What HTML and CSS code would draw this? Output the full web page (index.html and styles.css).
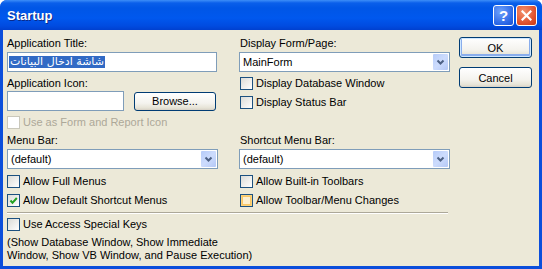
FILE: index.html
```html
<!DOCTYPE html>
<html lang="en">
<head>
  <meta charset="UTF-8">
  <title>Startup</title>
  <link rel="stylesheet" href="styles.css">
</head>
<body>

  <div class="window">
    <div class="titlebar">
      <span class="title">Startup</span>
      <div class="caption-btns">
        <span class="cap-btn help">?</span>
        <span class="cap-btn close">
          <svg width="11" height="11" viewBox="0 0 11 11"><path d="M1.5 1.5 L9.5 9.5 M9.5 1.5 L1.5 9.5" stroke="#fff" stroke-width="2.2" stroke-linecap="square"/></svg>
        </span>
      </div>
    </div>

    <div class="client">
      <div class="form">
        <div class="grid">
          <div class="col">
            <div class="label">Application Title:</div>
            <div class="textbox"><span class="selected">شاشة ادخال البيانات</span></div>
            <div class="label gap5">Application Icon:</div>
            <div class="icon-row">
              <div class="textbox short"></div>
              <button class="btn browse">Browse...</button>
            </div>
            <label class="check disabled gap5"><span class="box"></span>Use as Form and Report Icon</label>
          </div>

          <div class="col">
            <div class="label indent">Display Form/Page:</div>
            <div class="combo"><span>MainForm</span><span class="drop"><svg width="15" height="16" viewBox="0 0 15 16"><path d="M4.5 6.5 L7.5 9.5 L10.5 6.5" fill="none" stroke="#4d6185" stroke-width="2"/></svg></span></div>
            <label class="check indent gap5"><span class="box"></span>Display Database Window</label>
            <label class="check indent gap6"><span class="box"></span>Display Status Bar</label>
          </div>

          <div class="col">
            <div class="label">Menu Bar:</div>
            <div class="combo"><span>(default)</span><span class="drop"><svg width="15" height="16" viewBox="0 0 15 16"><path d="M4.5 6.5 L7.5 9.5 L10.5 6.5" fill="none" stroke="#4d6185" stroke-width="2"/></svg></span></div>
            <label class="check gap6"><span class="box"></span>Allow Full Menus</label>
            <label class="check gap6"><span class="box"><svg width="11" height="11" viewBox="0 0 11 11"><path d="M2.5 5.5 L4.5 7.8 L8.8 3" fill="none" stroke="#21a121" stroke-width="2"/></svg></span>Allow Default Shortcut Menus</label>
          </div>

          <div class="col">
            <div class="label indent">Shortcut Menu Bar:</div>
            <div class="combo"><span>(default)</span><span class="drop"><svg width="15" height="16" viewBox="0 0 15 16"><path d="M4.5 6.5 L7.5 9.5 L10.5 6.5" fill="none" stroke="#4d6185" stroke-width="2"/></svg></span></div>
            <label class="check indent gap6"><span class="box"></span>Allow Built-in Toolbars</label>
            <label class="check indent gap6"><span class="box hot"></span>Allow Toolbar/Menu Changes</label>
          </div>
        </div>

        <div class="sep"></div>

        <label class="check"><span class="box"></span>Use Access Special Keys</label>
        <p class="note">(Show Database Window, Show Immediate<br>Window, Show VB Window, and Pause Execution)</p>
      </div>

      <div class="buttons">
        <button class="btn default">OK</button>
        <button class="btn">Cancel</button>
      </div>
    </div>
  </div>

</body>
</html>
```

FILE: styles.css
```css
body {
  margin: 0;
  background: #fff;
  font-family: 'Liberation Sans', Arial, sans-serif;
  font-size: 11px;
  color: #000;
}

.window {
  width: 542px;
  height: 269px;
  background: #0b4edb;
  border-radius: 7px 7px 0 0;
  display: flex;
  flex-direction: column;
  overflow: hidden;
}

.titlebar {
  height: 30px;
  flex: none;
  display: flex;
  align-items: center;
  justify-content: space-between;
  padding: 0 5px 0 7px;
  background: linear-gradient(#3d8ef8 0px, #0a5fea 3px, #0056e6 8px, #0058ee 18px, #004be0 26px, #0040cf 30px);
}

.title {
  color: #fff;
  font-weight: bold;
  font-size: 13px;
  text-shadow: 1px 1px 0 #0a2a8a;
  margin-top: 1px;
}

.caption-btns {
  display: flex;
  gap: 2px;
}

.cap-btn {
  width: 19px;
  height: 19px;
  border: 1px solid #fff;
  border-radius: 3px;
  display: flex;
  align-items: center;
  justify-content: center;
  color: #fff;
  font-weight: bold;
  font-size: 15px;
}

.help {
  background: radial-gradient(circle at 35% 30%, #6fa2fb, #2a66e6 70%, #1c50d0);
}

.close {
  background: radial-gradient(circle at 35% 30%, #f3926e, #e0502d 65%, #c83a16);
}

.client {
  flex: 1;
  margin: 0 3px 3px 3px;
  background: #ece9d8;
  display: flex;
  padding: 7px 7px 0 4px;
}

.form {
  width: 441px;
}

.grid {
  display: grid;
  grid-template-columns: 232px 209px;
  row-gap: 5px;
}

.col {
  display: flex;
  flex-direction: column;
  align-items: flex-start;
}

.label {
  line-height: 13px;
  height: 13px;
}

.indent {
  margin-left: 1px;
}

.gap5 { margin-top: 5px; }
.gap6 { margin-top: 6px; }

.textbox {
  margin-top: 2px;
  width: 207px;
  height: 18px;
  border: 1px solid #7f9db9;
  background: #fff;
  display: flex;
  align-items: center;
  padding-left: 1px;
  box-sizing: content-box;
}

.textbox.short {
  width: 114px;
  margin-top: 0;
}

.selected {
  background: #316ac5;
  color: #fff;
  font-family: 'DejaVu Sans', sans-serif;
  font-size: 11px;
  line-height: 12px;
  padding: 0 1px;
}

.icon-row {
  margin-top: 1px;
  display: flex;
  align-items: center;
}

.btn {
  font-family: 'Liberation Sans', Arial, sans-serif;
  font-size: 11px;
  color: #000;
  border: 1px solid #003c74;
  border-radius: 3px;
  background: linear-gradient(#ffffff 0%, #f4f3ee 60%, #e6e3d6 88%, #d6d0c5 100%);
  padding: 0;
}

.browse {
  margin-left: 10px;
  width: 82px;
  height: 19px;
}

.combo {
  margin-top: 2px;
  height: 18px;
  border: 1px solid #7f9db9;
  background: #fff;
  display: flex;
  align-items: center;
  justify-content: space-between;
  padding-left: 3px;
  padding-right: 1px;
  box-sizing: content-box;
  width: 205px;
}

.drop {
  width: 15px;
  height: 16px;
  border-radius: 1px;
  background: linear-gradient(135deg, #b6cbf8, #cddcfd 50%, #b4c8f6);
  display: flex;
}

.check {
  display: flex;
  align-items: center;
  line-height: 13px;
  height: 13px;
}

.box {
  width: 11px;
  height: 11px;
  border: 1px solid #1c5180;
  background: linear-gradient(135deg, #dcdcd7, #ffffff);
  margin-right: 3px;
  display: flex;
  flex: none;
}

.box.hot {
  background: #fdf0cf;
  box-shadow: inset 0 0 0 1px #fcd27a, inset 0 0 0 2px #f9c766;
}

.check.disabled {
  color: #aca899;
}

.check.disabled .box {
  border-color: #cac8bb;
  background: #fff;
}

.sep {
  margin-top: 5px;
  width: 441px;
  border-top: 1px solid #aca899;
  border-bottom: 1px solid #fff;
  margin-bottom: 4px;
}

.note {
  margin: 5px 0 0 0;
  line-height: 13px;
}

.buttons {
  margin-left: 11px;
  display: flex;
  flex-direction: column;
  gap: 9px;
}

.buttons .btn {
  width: 73px;
  height: 21px;
}

.btn.default {
  box-shadow: inset 0 0 0 1px #cee7ff, inset 0 -1px 0 2px #89adec;
}
```
